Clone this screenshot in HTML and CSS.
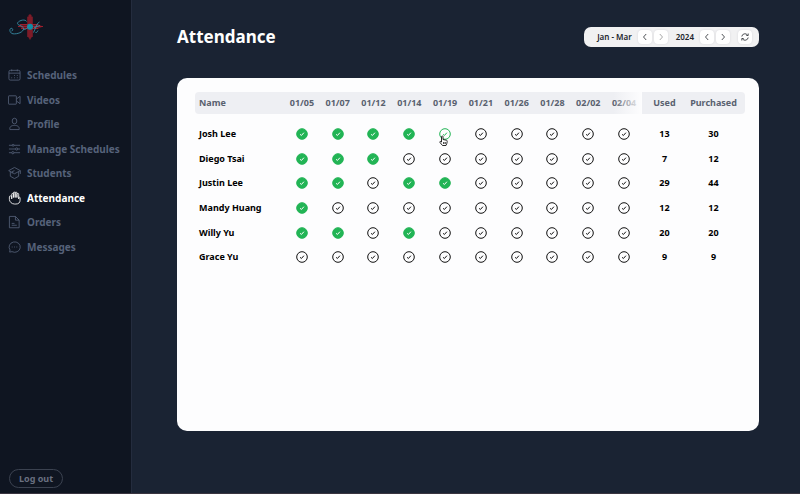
FILE: index.html
```html
<!DOCTYPE html>
<html lang="en">
<head>
<meta charset="utf-8">
<title>Attendance</title>
<link rel="stylesheet" href="styles.css">
</head>
<body>
<svg class="sprite" aria-hidden="true">
  <symbol id="check" viewBox="0 0 12 12"><circle class="disc" cx="6" cy="6" r="5.3"/><path class="tick" d="M4.100 6.300 5.400 7.500 7.900 4.700"/></symbol>
  <symbol id="prev" viewBox="0 0 8 8"><path d="M5.200 1 2.500 4l2.700 3"/></symbol>
  <symbol id="next" viewBox="0 0 8 8"><path d="M2.800 1 5.500 4 2.800 7"/></symbol>
</svg>
<div class="app">
  <aside class="sidebar">
    <svg class="logo" viewBox="0 0 36 28" role="img" aria-label="Studio logo">
      <path d="M19.500 3.500 21 1.500h2l1.500 2v20l-1.500 2h-2l-1.500-2zM11 12.500l3-1.500h16l5 2.500-5 2.500H14z" fill="#5d1825" stroke="none"/>
      <g stroke="#a51f2e" stroke-width=".9" fill="none">
        <path d="M20 4v20M22 1.500v25M24 4v20M12 11.500h18M10 13.500h25M13 15.500h17"/>
      </g>
      <circle cx="22" cy="13.800" r="3" fill="#0d8fa8" stroke="none"/>
      <path d="M18.500 8.500c-1-2.500-7-1.500-8.800 1.200-1.500 2.800 5.500 2.600 5.800 5.800.3 3.700-6.500 5.800-10.500 5.300-3.500-.6-4-5-1.800-5.500 2.300-.1 1.700 2.900.3 2.700M15 16c3 2 6-3.500 7-3.500M25.500 19.500l4-9 2-1.500M26 14.500l6-2M27.500 19.500c1.200.3 2-.8 2.500-2" fill="none" stroke="#378ba4" stroke-width=".9"/>
    </svg>
    <nav class="nav">
      <a class="nav-link" href="#schedules"><svg viewBox="0 0 14 14"><rect x="1" y="2" width="12" height="10.500" rx="1.500"/><path d="M1 5h12M4 1v2M10 1v2"/><path d="M6.500 7.500h1M9.500 7.500h1M3.500 10h1M6.500 10h1M9.500 10h1"/></svg>Schedules</a>
      <a class="nav-link" href="#videos"><svg viewBox="0 0 14 14"><rect x=".5" y="2.500" width="8.500" height="9" rx=".5"/><path d="m9 6 4-3v8L9 8"/></svg>Videos</a>
      <a class="nav-link" href="#profile"><svg viewBox="0 0 14 14"><ellipse cx="7" cy="3.800" rx="2.500" ry="3"/><path d="M2 13c-.5-3 1.500-4.500 5-4.500s5.500 1.500 5 4.500z"/></svg>Profile</a>
      <a class="nav-link" href="#manage"><svg viewBox="0 0 14 14"><path d="M1 3h3.500M6.500 3H13M1 7h7M10.500 7H13M1 11h3M6.500 11H13"/><circle cx="5.500" cy="3" r="1"/><circle cx="9.300" cy="7" r="1.200"/><circle cx="5.200" cy="11" r="1.200"/></svg>Manage Schedules</a>
      <a class="nav-link" href="#students"><svg viewBox="0 0 14 14"><path d="M7 1 .7 4.500 7 7.800l6.300-3.300zM2.500 5.500v5L7 13l4.500-2.500v-5M4.500 7.500v-2L7 4.500M13.300 4.500V8"/></svg>Students</a>
      <a class="nav-link active" href="#attendance" aria-current="page"><svg viewBox="0 0 14 14"><path d="M4 8V3a.9.900 0 0 1 1.800 0v3.500V1.600a.9.900 0 0 1 1.900 0v4.900V1.600a.9.900 0 0 1 1.900 0V6.500 3a.9.900 0 0 1 1.900 0v5l.1-1.500a.8.800 0 0 1 1.400.2V9.500c0 2.500-1.700 4-4.500 4H7C4 13.500 1.500 11 1.500 8.500V5.800a1.200 1 0 0 1 2.500 0z"/></svg>Attendance</a>
      <a class="nav-link" href="#orders"><svg viewBox="0 0 14 14"><path d="M1.500 1H8l4 4v8.200H1.500zM8 1v4h4M4 8.500h3M4 10.500h5.500"/></svg>Orders</a>
      <a class="nav-link" href="#messages"><svg viewBox="0 0 14 14"><path d="M1.800 12.500l.4-2.300A6 5.600 0 1 1 4.300 12zM4 7h1M6.500 7h1M9 7h1"/></svg>Messages</a>
    </nav>
    <button class="logout" type="button">Log out</button>
  </aside>
  <main class="main">
    <header class="top">
      <h1>Attendance</h1>
      <div class="period">
        <span class="months">Jan - Mar</span>
        <button type="button" aria-label="Previous quarter"><svg><use href="#prev"/></svg></button>
        <button type="button" class="muted" aria-label="Next quarter"><svg><use href="#next"/></svg></button>
        <span class="year">2024</span>
        <button type="button" aria-label="Previous year"><svg><use href="#prev"/></svg></button>
        <button type="button" aria-label="Next year"><svg><use href="#next"/></svg></button>
        <button type="button" class="refresh" aria-label="Refresh"><svg viewBox="0 0 8 8"><path d="M.8 3.500A3.200 3.200 0 0 1 6.500 2M7.200 4.500A3.200 3.200 0 0 1 1.500 6M7.200.5v2H5.300M.8 7.500v-2h1.900"/></svg></button>
      </div>
    </header>
    <section class="card">
      <table>
        <colgroup><col class="col-name"><col span="10"><col class="col-used"><col class="col-bought"></colgroup>
        <thead><tr id="head"></tr></thead>
        <tbody id="rows"></tbody>
      </table>
    </section>
  </main>
</div>
<script src="script.js"></script>
</body>
</html>
```
FILE: styles.css
```css
* { box-sizing: border-box; }
body {
  margin: 0;
  font-family: "Noto Sans", sans-serif;
  font-weight: 700;
  background: #1a2333;
}
button { font: inherit; cursor: pointer; }
svg { fill: none; stroke: currentColor; }
.sprite { position: absolute; width: 0; height: 0; }
.app {
  display: grid;
  grid-template-columns: 132px 1fr;
  min-height: 100vh;
  border-bottom: 1px solid #39343f;
}
.sidebar {
  display: flex;
  flex-direction: column;
  align-items: flex-start;
  padding: 13px 0 5px 8px;
  background: #0f1521;
  border-right: 1px solid #242c3e;
}
.logo { width: 36px; height: 28px; }
.nav {
  display: grid;
  grid-auto-rows: 1fr;
  height: 196px;
  margin-top: 22px;
}
.nav-link {
  display: flex;
  align-items: center;
  gap: 6px;
  color: #56627a;
  font-size: 10px;
  line-height: 16px;
  text-decoration: none;
  white-space: nowrap;
}
.nav-link svg { width: 13px; height: 14px; stroke-width: 0.9; }
.nav-link.active { color: #fff; }
.logout {
  margin-top: auto;
  margin-left: 1px;
  height: 19px;
  padding: 0 9px;
  border: 1px solid #3b4250;
  border-radius: 10px;
  background: transparent;
  color: #697080;
  font-size: 9px;
  line-height: 16px;
}
.main {
  display: flex;
  flex-direction: column;
  padding: 24px 41px 62px 45px;
}
.top {
  display: flex;
  align-items: center;
  justify-content: space-between;
  height: 26px;
  margin-bottom: 28px;
}
h1 { margin: 0; color: #fff; font-size: 17px; line-height: 24px; }
.period {
  display: flex;
  align-items: center;
  gap: 2px;
  height: 20px;
  padding: 0 7px 0 13px;
  border-radius: 7px;
  background: #f1f1f2;
  color: #20242b;
  font-size: 8px;
  font-weight: 600;
  line-height: 10px;
}
.months { margin-right: 4px; }
.year { margin: 0 4px 0 6px; }
.period button {
  display: grid;
  place-items: center;
  width: 14px;
  height: 14px;
  padding: 0;
  border: 0;
  border-radius: 4px;
  background: #fff;
  color: #25282d;
  box-shadow: 0 0 2px #d4d4d8;
}
.period .muted { color: #929292; }
.period .refresh { margin-left: 6px; }
.period svg { width: 8px; height: 8px; stroke-width: 0.8; }
.card {
  flex: 1;
  padding: 14px 14px 14px 18px;
  border-radius: 10px;
  background: #fdfdfe;
}
table {
  width: 100%;
  border-collapse: collapse;
  table-layout: fixed;
  font-size: 9px;
  line-height: 12px;
  text-align: center;
}
.col-name { width: 89px; }
.col-used { width: 45px; }
.col-bought { width: 58px; }
th, td { padding: 0; white-space: nowrap; }
thead tr { height: 22px; }
thead th { background: #eeeff3; color: #59616f; }
th:first-child { padding-left: 4px; text-align: left; }
thead th:first-child { border-radius: 4px 0 0 4px; }
thead th:last-child { border-radius: 0 4px 4px 0; }
thead th:last-child, td:last-child { padding-right: 5px; }
thead .fade { position: relative; }
.fade::after {
  content: "";
  position: absolute;
  inset: 0;
  background: linear-gradient(to right, #fdfdfe00 20%, #fdfdfe 100%);
}
tbody::before { content: ""; display: block; height: 7px; }
tbody tr { height: 25px; }
tbody tr:nth-child(3n) { height: 24px; }
.mark { display: grid; position: relative; justify-content: center; }
.mark input, .mark > svg { grid-area: 1 / 1; width: 12px; height: 12px; margin: 0; }
.mark input { opacity: 0; }
.mark > svg { pointer-events: none; color: #111; }
.mark input:checked + svg { color: #22b455; fill: #22b455; --tick: #fff; }
.mark > .hover { color: #22b455; }
.tick { stroke: var(--tick, currentColor); fill: none; }
.mark > .cursor {
  position: absolute;
  top: 7px;
  left: 0;
  width: 9px;
  height: 11px;
  color: #111;
  fill: #fff;
  z-index: 1;
}
```
FILE: script.js
```js
const dates = ["01/05", "01/07", "01/12", "01/14", "01/19", "01/21", "01/26", "01/28", "02/02", "02/04"];
const students = [
  ["Josh Lee", [0, 1, 2, 3], 13, 30],
  ["Diego Tsai", [0, 1, 2], 7, 12],
  ["Justin Lee", [0, 1, 3, 4], 29, 44],
  ["Mandy Huang", [0], 12, 12],
  ["Willy Yu", [0, 1, 3], 20, 20],
  ["Grace Yu", [], 9, 9],
];
const cursor = '<svg class="cursor" viewBox="0 0 9 11"><path stroke-width=".9" d="M2.500 6V1.500a.8.800 0 0 1 1.500 0V4.500l3.300.7c.8.200 1 .7.900 1.400L7.800 8.500 7 10.500H3.500L1 7.500c-.5-1 .3-1.500 1.500-.5zM4.700 7v2M6.200 7v2"/></svg>';

document.getElementById("head").innerHTML =
  '<th scope="col">Name</th>' +
  dates.map((d, i) => `<th scope="col"${i === 9 ? ' class="fade"' : ""}>${d}</th>`).join("") +
  '<th scope="col">Used</th><th scope="col">Purchased</th>';

document.getElementById("rows").innerHTML = students.map(([name, present, used, bought], row) => {
  const marks = dates.map((d, i) => {
    const hovered = row === 0 && i === 4;
    return `<td><label class="mark"><input type="checkbox" aria-label="${name} ${d}"${present.includes(i) ? " checked" : ""}>` +
      `<svg${hovered ? ' class="hover"' : ""}><use href="#check"/></svg>${hovered ? cursor : ""}</label></td>`;
  }).join("");
  return `<tr><th scope="row">${name}</th>${marks}<td>${used}</td><td>${bought}</td></tr>`;
}).join("");
```
